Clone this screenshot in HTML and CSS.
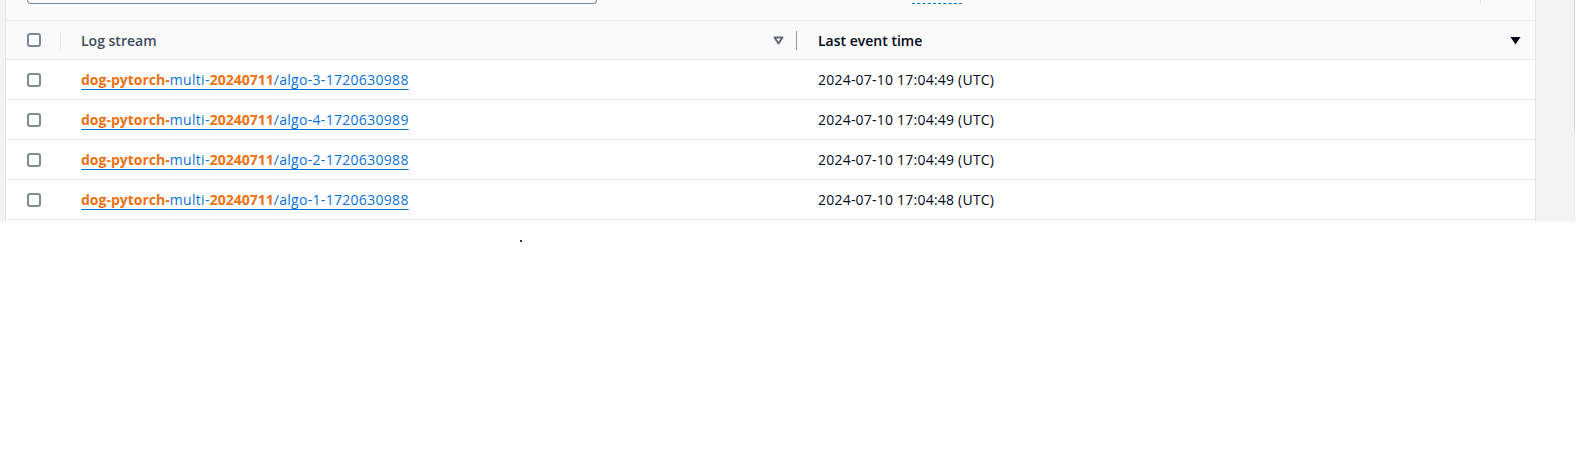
FILE: index.html
```html
<!DOCTYPE html>
<html>
<head>
<meta charset="utf-8">
<link rel="stylesheet" href="styles.css">
</head>
<body>
<div class="frame">
  <div class="side-left"></div>
  <div class="main">
    <div class="toolbar">
      <div class="search"></div>
      <div class="dashed"></div>
      <div class="tick"></div>
    </div>
    <div class="row head">
      <div class="cell chk"><span class="box"></span><span class="sep light"></span></div>
      <div class="cell col-name">
        <span class="htext">Log stream</span>
        <svg class="sort-outline" width="11" height="9" viewBox="0 0 11 9"><polygon points="1.5,1.5 9.5,1.5 5.5,7.5" fill="none" stroke="#5f6b7a" stroke-width="2" stroke-linejoin="round"/></svg>
        <span class="sep dark"></span>
      </div>
      <div class="cell col-time">
        <span class="htext active">Last event time</span>
        <svg class="sort-fill" width="11" height="9" viewBox="0 0 11 9"><polygon points="0.5,1 10.5,1 5.5,8.5" fill="#000716"/></svg>
      </div>
    </div>
    <div class="row">
      <div class="cell chk"><span class="box"></span></div>
      <div class="cell col-name"><a class="link" href="#"><b>dog-pytorch-</b>multi-<b>20240711</b>/algo-3-1720630988</a></div>
      <div class="cell col-time">2024-07-10 17:04:49 (UTC)</div>
    </div>
    <div class="row">
      <div class="cell chk"><span class="box"></span></div>
      <div class="cell col-name"><a class="link" href="#"><b>dog-pytorch-</b>multi-<b>20240711</b>/algo-4-1720630989</a></div>
      <div class="cell col-time">2024-07-10 17:04:49 (UTC)</div>
    </div>
    <div class="row">
      <div class="cell chk"><span class="box"></span></div>
      <div class="cell col-name"><a class="link" href="#"><b>dog-pytorch-</b>multi-<b>20240711</b>/algo-2-1720630988</a></div>
      <div class="cell col-time">2024-07-10 17:04:49 (UTC)</div>
    </div>
    <div class="row">
      <div class="cell chk"><span class="box"></span></div>
      <div class="cell col-name"><a class="link" href="#"><b>dog-pytorch-</b>multi-<b>20240711</b>/algo-1-1720630988</a></div>
      <div class="cell col-time">2024-07-10 17:04:48 (UTC)</div>
    </div>
  </div>
  <div class="side-right">
    <div class="thumb"></div>
    <div class="track"></div>
  </div>
</div>
<div class="below"><span class="dot"></span></div>
</body>
</html>
```
FILE: styles.css
```css
* { box-sizing: border-box; }
html, body { margin: 0; padding: 0; background: #ffffff; }
body {
  font-family: "Open Sans", "Liberation Sans", Arial, sans-serif;
  font-size: 14px;
  color: #000716;
}
.frame {
  display: flex;
  width: 1575px;
  height: 222px;
}
.side-left {
  width: 6px;
  background: #f2f3f3;
  border-right: 1px solid #e3e5e7;
}
.main {
  width: 1529px;
  background: #ffffff;
  display: flex;
  flex-direction: column;
}
.toolbar {
  height: 20px;
  background: #fafafa;
  display: flex;
  align-items: flex-start;
}
.search {
  margin-left: 21px;
  width: 570px;
  height: 4px;
  border: 1px solid #7d8998;
  border-top: none;
  border-radius: 0 0 4px 4px;
}
.dashed {
  margin-left: 315px;
  width: 50px;
  height: 4px;
  border-bottom: 1px dashed #0972d3;
}
.tick {
  margin-left: 518px;
  width: 1px;
  height: 4px;
  background: #e3e5e7;
}
.row {
  display: flex;
  height: 40px;
  border-bottom: 1px solid #e9ebed;
}
.row.head {
  background: #fafafa;
  border-top: 1px solid #e9ebed;
  height: 40px;
}
.cell {
  display: flex;
  align-items: center;
  position: relative;
}
.chk {
  width: 55px;
  padding-left: 21px;
}
.col-name {
  width: 736px;
  padding-left: 20px;
}
.col-time {
  flex: 1;
  padding-left: 21px;
  letter-spacing: 0.22px;
}
.box {
  width: 14px;
  height: 14px;
  border: 2px solid #7d8998;
  border-radius: 3px;
  background: #fff;
}
.sep {
  position: absolute;
  right: 0;
  top: 10px;
  width: 1px;
  height: 19px;
}
.sep.light { background: #e9ebed; }
.sep.dark { background: #8d99a8; }
.htext {
  font-weight: 600;
  color: #414d5c;
  letter-spacing: 0;
}
.htext.active { color: #000716; }
.sort-outline {
  margin-left: auto;
  margin-right: 13px;
}
.sort-fill {
  margin-left: auto;
  margin-right: 14px;
}
.link {
  color: #0972d3;
  text-decoration: underline;
  text-decoration-thickness: 1px;
  text-underline-offset: 4px;
  letter-spacing: 0.3px;
}
.link b {
  color: #ec7211;
  font-weight: 700;
  letter-spacing: 0;
}
.side-right {
  width: 40px;
  display: flex;
  flex-direction: column;
  background: #f2f3f3;
  border-left: 1px solid #e3e5e7;
}
.thumb {
  height: 131px;
  border-right: 1px solid #d1d5d8;
}
.track {
  flex: 1;
  border-right: 1px solid #e9ebed;
}
.below {
  height: 251px;
  padding-left: 520px;
  padding-top: 18px;
}
.dot {
  display: block;
  width: 2px;
  height: 2px;
  background: #333;
}
```
